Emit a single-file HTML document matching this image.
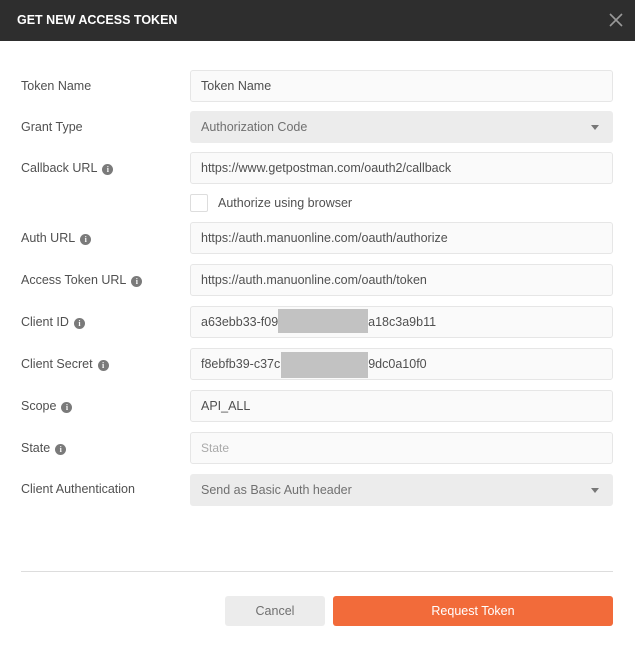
<!DOCTYPE html>
<html><head><style>
*{box-sizing:border-box;margin:0;padding:0}
body{width:635px;height:648px;background:#fff;font-family:"Liberation Sans",sans-serif;font-size:12.5px;color:#505050;position:relative;overflow:hidden}
.hdr{position:absolute;left:0;top:0;width:635px;height:41px;background:#2e2e2e;color:#fff;font-weight:bold;font-size:12.5px;padding:13px 0 0 17px}
.x{position:absolute;right:12px;top:13px}
.lbl{position:absolute;left:21px;color:#505050}
.i{display:inline-block;width:11px;height:11px;border-radius:50%;background:#7a7a7a;color:#fff;font-size:8px;font-weight:bold;text-align:center;line-height:11px;margin-left:5px;vertical-align:0px;font-family:"Liberation Serif",serif}
.in{position:absolute;left:190px;width:423px;height:32px;border:1px solid #e6e6e6;background:#fafafa;border-radius:3px;padding:8px 10px;color:#505050}
.sel{background:#ececec;border-color:#ececec;color:#707070}
.sel:after{content:"";position:absolute;right:13px;top:13px;border-left:4px solid transparent;border-right:4px solid transparent;border-top:5px solid #777}
.red{position:absolute;background:#c2c2c2}
.btn{position:absolute;top:596px;height:30px;border-radius:3px;text-align:center;line-height:30px}
</style></head><body>
<div class="hdr">GET NEW ACCESS TOKEN<svg class="x" width="14" height="14" viewBox="0 0 14 14"><path d="M1 1L13 13M13 1L1 13" stroke="#999" stroke-width="1.6"/></svg></div>

<div class="lbl" style="top:79px">Token Name</div>
<div class="in" style="top:70px">Token Name</div>

<div class="lbl" style="top:120px">Grant Type</div>
<div class="in sel" style="top:111px">Authorization Code</div>

<div class="lbl" style="top:161px">Callback URL<span class="i">i</span></div>
<div class="in" style="top:152px">https://www.getpostman.com/oauth2/callback</div>

<div style="position:absolute;left:190px;top:194px;width:18px;height:18px;border:1px solid #ddd;border-radius:2px;background:#fff"></div>
<div style="position:absolute;left:218px;top:196px">Authorize using browser</div>

<div class="lbl" style="top:231px">Auth URL<span class="i">i</span></div>
<div class="in" style="top:222px">https://auth.manuonline.com/oauth/authorize</div>

<div class="lbl" style="top:273px">Access Token URL<span class="i">i</span></div>
<div class="in" style="top:264px">https://auth.manuonline.com/oauth/token</div>

<div class="lbl" style="top:315px">Client ID<span class="i">i</span></div>
<div class="in" style="top:306px">a63ebb33-f09&#8203;<span style="margin-left:90px">a18c3a9b11</span></div>
<div class="red" style="left:278px;top:309px;width:90px;height:24px"></div>

<div class="lbl" style="top:357px">Client Secret<span class="i">i</span></div>
<div class="in" style="top:348px">f8ebfb39-c37c<span style="margin-left:88px">9dc0a10f0</span></div>
<div class="red" style="left:281px;top:352px;width:87px;height:26px"></div>

<div class="lbl" style="top:399px">Scope<span class="i">i</span></div>
<div class="in" style="top:390px">API_ALL</div>

<div class="lbl" style="top:441px">State<span class="i">i</span></div>
<div class="in" style="top:432px;color:#aaa;font-size:12px">State</div>

<div class="lbl" style="top:482px">Client Authentication</div>
<div class="in sel" style="top:474px">Send as Basic Auth header</div>

<div style="position:absolute;left:21px;top:571px;width:592px;height:1px;background:#ddd"></div>
<div class="btn" style="left:225px;width:100px;background:#ececec;color:#707070">Cancel</div>
<div class="btn" style="left:333px;width:280px;background:#f26b3a;color:#fff">Request Token</div>
</body></html>
